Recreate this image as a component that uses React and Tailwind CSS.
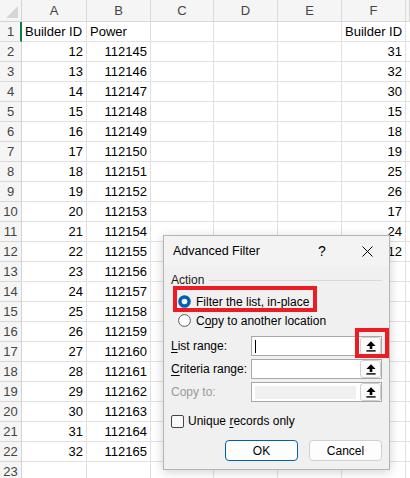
import React from "react";

const colWidths = ["w-[65px]", "w-[64px]", "w-[63px]", "w-[64px]", "w-[64px]", "w-[64px]"];
const letters = ["A", "B", "C", "D", "E", "F", ""];
const fValues = { 2: "31", 3: "32", 4: "30", 5: "15", 6: "18", 7: "19", 8: "25", 9: "26", 10: "17", 11: "24", 12: "12" };

function rowData(r) {
  if (r === 1) return [{ t: "Builder ID" }, { t: "Power" }, {}, {}, {}, { t: "Builder ID" }, {}];
  if (r >= 2 && r <= 22) {
    return [
      { t: String(r + 10), right: true },
      { t: String(112143 + r), right: true },
      {},
      {},
      {},
      fValues[r] ? { t: fValues[r], right: true } : {},
      {},
    ];
  }
  return [{}, {}, {}, {}, {}, {}, {}];
}

function UpArrow() {
  return (
    <svg width="10" height="11" viewBox="0 0 10 11">
      <polygon points="5,0.3 9.6,5 0.4,5" fill="#000" />
      <rect x="3.7" y="4.6" width="2.6" height="3.4" fill="#000" />
      <rect x="0.4" y="9.2" width="9.2" height="1.4" fill="#000" />
    </svg>
  );
}

function RangeInput({ caret, disabled }) {
  return (
    <div className="w-[132px] h-[20px] bg-white border border-[#a8a8a8] flex items-center">
      {caret && <div className="ml-[3px] w-px h-[13px] bg-black" />}
      {disabled && <div className="ml-[3px] mt-px w-[101px] h-[13px] bg-[#f0f0f0]" />}
      <div className="ml-auto w-[21px] h-full rounded-[3px] border border-[#d0d0d0] bg-[#fbfbfb] flex items-center justify-center">
        <UpArrow />
      </div>
    </div>
  );
}

function U({ children }) {
  return <span className="underline decoration-1 underline-offset-[2px]">{children}</span>;
}

export default function App() {
  const rows = Array.from({ length: 23 }, (_, i) => i + 1);
  return (
    <div
      className="relative w-[410px] h-[478px] overflow-hidden bg-white"
      style={{ fontFamily: '"Liberation Sans", Arial, sans-serif' }}
    >
      {/* Sheet */}
      <div className="flex flex-col">
        <div className="flex h-[22px] bg-[#f5f5f5]">
          <div className="w-[22px] shrink-0 h-full border-r border-b border-[#d4d4d4] flex items-end justify-end">
            <svg width="14" height="14" viewBox="0 0 14 14" className="mb-[2px] mr-[2px]">
              <polygon points="13,1 13,13 1,13" fill="#d6d6d6" />
            </svg>
          </div>
          {letters.map((l, i) => (
            <div
              key={i}
              className={`${i < 6 ? colWidths[i] : "flex-1"} shrink-0 h-full border-r border-b border-[#d9d9d9] flex items-center justify-center text-[13px] text-[#444]`}
            >
              {l}
            </div>
          ))}
        </div>
        {rows.map((r) => {
          const data = rowData(r);
          return (
            <div key={r} className="flex h-[20px]">
              <div
                className={`w-[22px] shrink-0 h-full bg-[#f5f5f5] border-b border-[#d9d9d9] flex items-center justify-center text-[13px] text-[#444] ${
                  r === 1 ? "border-r-2 border-r-[#107c41] pl-px" : "border-r border-r-[#d4d4d4]"
                }`}
              >
                {r}
              </div>
              {data.map((c, i) => (
                <div
                  key={i}
                  className={`${i < 6 ? colWidths[i] : "flex-1"} shrink-0 h-full border-r border-b border-[#e1e1e1] flex items-center px-[3px] text-[13px] text-black whitespace-nowrap overflow-visible ${
                    c.right ? "justify-end" : "justify-start"
                  }`}
                >
                  {c.t}
                </div>
              ))}
            </div>
          );
        })}
      </div>

      {/* Dialog */}
      <div className="absolute left-[163px] top-[235px] w-[227px] h-[235px] bg-[#f0f0f0] border border-[#b4b4b4] shadow-[0_2px_10px_rgba(0,0,0,0.18)] flex flex-col text-[12px] text-black">
        <div className="h-[30px] flex items-center bg-[#f3f3f3]">
          <div className="pl-[9px] text-[12.5px]">Advanced Filter</div>
          <div className="ml-auto w-[46px] h-full flex items-center justify-center text-[14px]">?</div>
          <div className="w-[44px] h-full flex items-center justify-center">
            <svg width="11" height="11" viewBox="0 0 11 11">
              <path d="M0.5 0.5 L10.5 10.5 M10.5 0.5 L0.5 10.5" stroke="#000" strokeWidth="1" />
            </svg>
          </div>
        </div>
        <div className="flex flex-col px-[7px]">
          <div className="mt-[6px] h-[16px] flex items-center">
            <span className="text-[#1a1a1a]">Action</span>
            <div className="ml-[5px] flex-1 h-px bg-[#d8d8d8]" />
          </div>
          <div className="mt-[4px] h-[19px] flex items-center pl-[7px]">
            <svg width="13" height="13" viewBox="0 0 13 13">
              <circle cx="6.5" cy="6.5" r="6.3" fill="#005fb8" />
              <circle cx="6.5" cy="6.5" r="2.8" fill="#fff" />
            </svg>
            <span className="ml-[5px]">
              <U>F</U>ilter the list, in-place
            </span>
          </div>
          <div className="h-[19px] flex items-center pl-[7px]">
            <svg width="13" height="13" viewBox="0 0 13 13">
              <circle cx="6.5" cy="6.5" r="5.9" fill="#fff" stroke="#5a5a5a" strokeWidth="1" />
            </svg>
            <span className="ml-[5px]">
              C<U>o</U>py to another location
            </span>
          </div>
          <div className="mt-[6px] h-[20px] flex items-center">
            <div className="w-[81px]">
              <U>L</U>ist range:
            </div>
            <RangeInput caret />
          </div>
          <div className="mt-[3px] h-[20px] flex items-center">
            <div className="w-[81px]">
              <U>C</U>riteria range:
            </div>
            <RangeInput />
          </div>
          <div className="mt-[3px] h-[20px] flex items-center">
            <div className="w-[81px] text-[#9a9a9a]">Copy to:</div>
            <RangeInput disabled />
          </div>
          <div className="mt-[11px] h-[16px] flex items-center">
            <div className="w-[13px] h-[13px] rounded-[2px] border border-[#444] bg-[#fafafa]" />
            <span className="ml-[4px]">
              Unique <U>r</U>ecords only
            </span>
          </div>
          <div className="mt-[11px] flex justify-end gap-[11px]">
            <div className="w-[73px] h-[21px] rounded-[4px] border border-[#005fb8] bg-[#fdfdfd] flex items-center justify-center">
              OK
            </div>
            <div className="w-[73px] h-[21px] rounded-[4px] border border-[#d0d0d0] bg-[#fdfdfd] flex items-center justify-center">
              Cancel
            </div>
          </div>
        </div>
      </div>

      {/* Annotation boxes */}
      <div className="absolute left-[173px] top-[286px] w-[144px] h-[26px] border-4 border-[#ed1c24]" />
      <div className="absolute left-[355px] top-[328px] w-[34px] h-[30px] border-4 border-[#ed1c24]" />
    </div>
  );
}
